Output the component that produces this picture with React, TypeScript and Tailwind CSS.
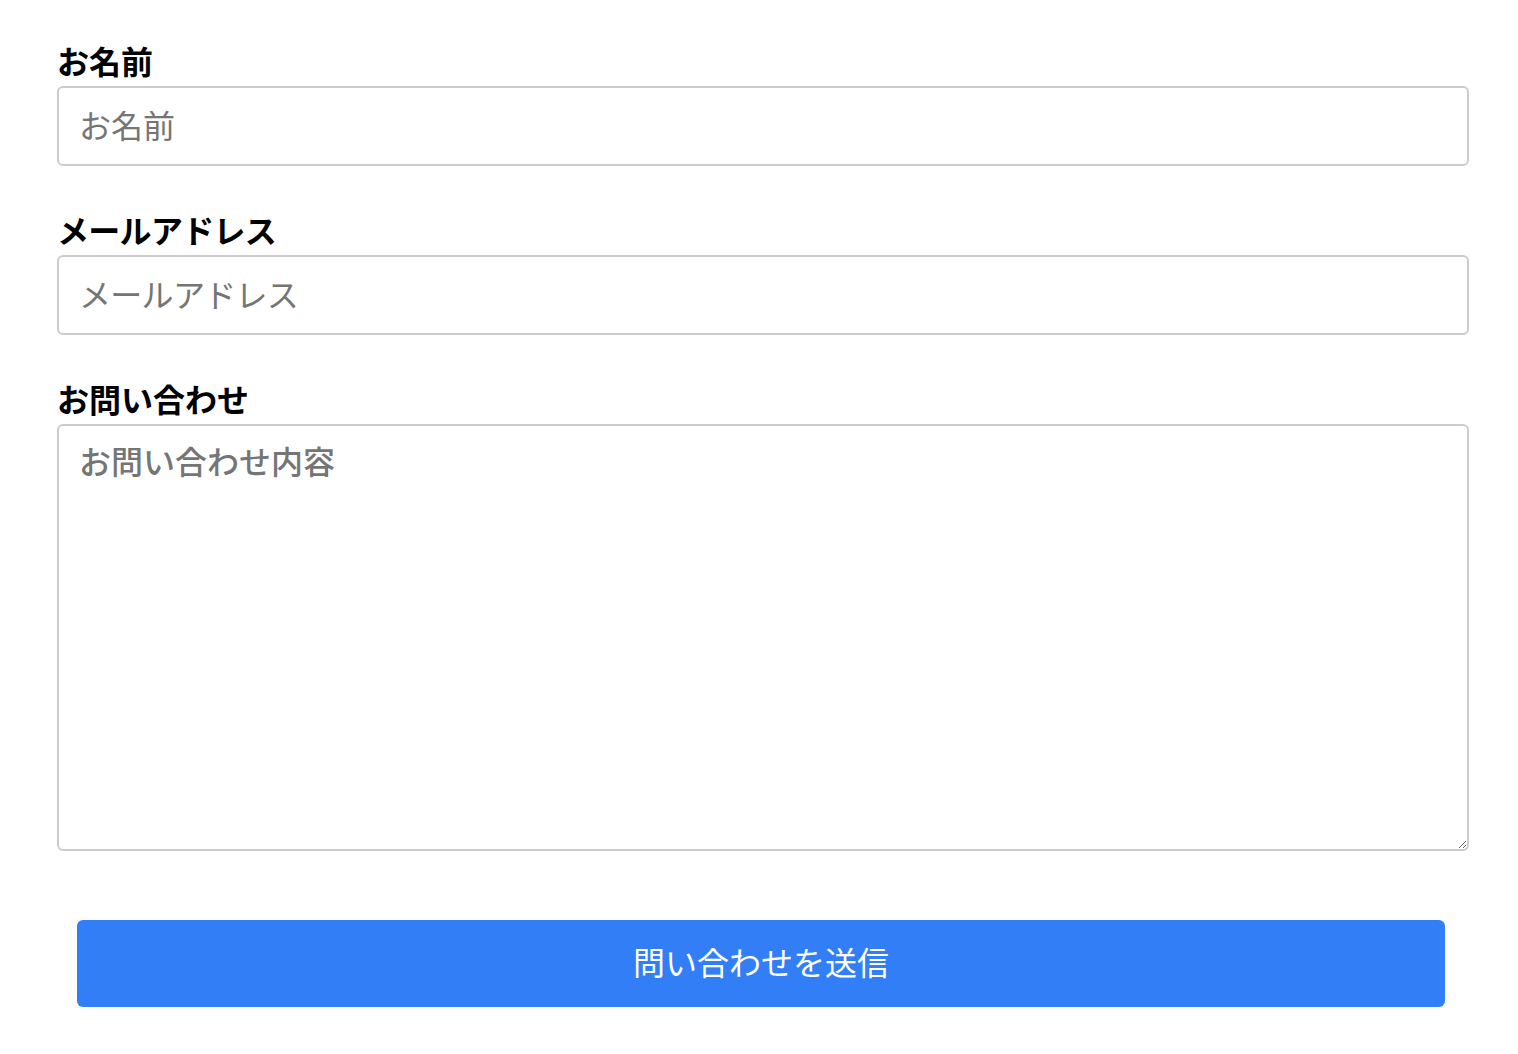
import { useState } from "react";

const fontStack = { fontFamily: '"Noto Sans CJK JP", "Noto Sans", sans-serif' };

const ContactForm = () => {
    const [name, setName] = useState("");
    const [email, setEmail] = useState("");
    const [message, setMessage] = useState("");

    const labelClass = "block h-[38px] leading-[38px] mb-[7px] text-[32px] font-bold text-black";
    const fieldClass =
        "block w-full border-2 border-[#cccccc] rounded-[6px] px-[20px] text-[32px] text-black placeholder:text-[#757575] outline-none bg-white";

    return (
        <form
            className="ml-[57px] w-[1412px] pt-[41px] pb-[47px]"
            style={fontStack}
            onSubmit={(e) => e.preventDefault()}
        >
            <label className={labelClass}>お名前</label>
            <input
                type="text"
                value={name}
                onChange={(e) => setName(e.target.value)}
                placeholder="お名前"
                className={`${fieldClass} h-[80px] pb-[4px]`}
            />

            {/* kana run a little narrower in the reference */}
            <label className={`${labelClass} mt-[44px] tracking-[-0.7px]`}>メールアドレス</label>
            <input
                type="email"
                value={email}
                onChange={(e) => setEmail(e.target.value)}
                placeholder="メールアドレス"
                className={`${fieldClass} h-[80px] pb-[4px] placeholder:tracking-[-0.7px]`}
            />

            <label className={`${labelClass} mt-[44px]`}>お問い合わせ</label>
            <textarea
                value={message}
                onChange={(e) => setMessage(e.target.value)}
                placeholder="お問い合わせ内容"
                className={`${fieldClass} h-[427px] pt-[15px] leading-[38px] font-medium`}
            />

            {/* Submit */}
            <button
                type="submit"
                className="block ml-[20px] w-[1368px] h-[87px] mt-[69px] pb-[5px] rounded-[6px] bg-[#317ef7] text-white text-[32px]"
            >
                問い合わせを送信
            </button>
        </form>
    );
};

export default function App() {
    return (
        <main className="min-h-screen bg-white">
            <ContactForm />
        </main>
    );
}
